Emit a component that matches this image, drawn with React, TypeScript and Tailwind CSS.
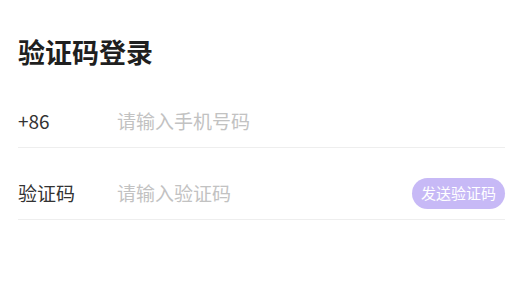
import { useState } from "react";

const font = { fontFamily: '"Noto Sans CJK SC", "Noto Sans", sans-serif' };

function Row({ label, children }: { label: string; children: React.ReactNode }) {
  return (
    <div className="flex h-[72px] items-center border-b border-[#eeeeee] pt-[20px]">
      <div className="w-[99px] shrink-0 text-[19px] text-[#333333]">{label}</div>
      {children}
    </div>
  );
}

export default function App() {
  const [phone, setPhone] = useState("");
  const [code, setCode] = useState("");

  return (
    <div className="min-h-screen bg-white pl-[18px] pr-[17px] pt-[36px]" style={font}>
      <h1 className="text-[27px] font-bold leading-[32px] text-[#1f1f1f]">验证码登录</h1>
      <div className="mt-[8px]">
        <Row label="+86">
          <input
            value={phone}
            onChange={(e) => setPhone(e.target.value)}
            placeholder="请输入手机号码"
            className="min-w-0 flex-1 bg-transparent text-[19px] text-[#333333] outline-none placeholder:text-[#c2c2c2]"
          />
        </Row>
        <Row label="验证码">
          <input
            value={code}
            onChange={(e) => setCode(e.target.value)}
            placeholder="请输入验证码"
            className="min-w-0 flex-1 bg-transparent text-[19px] text-[#333333] outline-none placeholder:text-[#c2c2c2]"
          />
          <button className="h-[31px] w-[93px] shrink-0 rounded-full bg-[#c7b9f6] text-[15px] text-white">
            发送验证码
          </button>
        </Row>
      </div>
    </div>
  );
}
